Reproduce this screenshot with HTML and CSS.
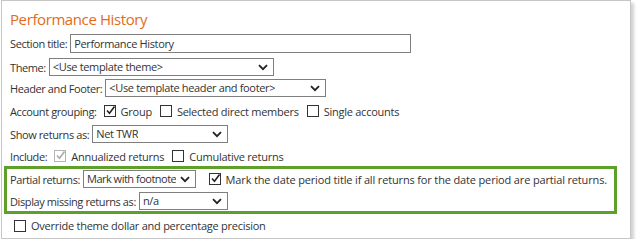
FILE: index.html
```html
<!DOCTYPE html>
<html lang="en">
<head>
    <meta charset="UTF-8">
    <title>Performance History</title>
    <link rel="stylesheet" href="styles.css">
</head>
<body>

<div class="panel">
    <h2 class="panel-title">Performance History</h2>

    <div class="row row-title">
        <label>Section title:</label>
        <div class="textbox">Performance History</div>
    </div>

    <div class="row row-theme">
        <label>Theme:</label>
        <div class="select select-theme"><span>&lt;Use template theme&gt;</span><svg class="chev" width="10" height="7" viewBox="0 0 10 7"><path d="M1 1.2 L5 5.2 L9 1.2" fill="none" stroke="#222" stroke-width="1.8"/></svg></div>
    </div>

    <div class="row row-header">
        <label>Header and Footer:</label>
        <div class="select select-header"><span>&lt;Use template header and footer&gt;</span><svg class="chev" width="10" height="7" viewBox="0 0 10 7"><path d="M1 1.2 L5 5.2 L9 1.2" fill="none" stroke="#222" stroke-width="1.8"/></svg></div>
    </div>

    <div class="row row-check">
        <label>Account grouping:</label>
        <span class="check checked"><svg width="11" height="11" viewBox="0 0 11 11"><path d="M2 5.5 L4.5 8.3 L9.5 1.5" fill="none" stroke="#222" stroke-width="1.6"/></svg></span>
        <span class="opt">Group</span>
        <span class="check"></span>
        <span class="opt">Selected direct members</span>
        <span class="check"></span>
        <span class="opt">Single accounts</span>
    </div>

    <div class="row row-show">
        <label>Show returns as:</label>
        <div class="select select-show"><span>Net TWR</span><svg class="chev" width="10" height="7" viewBox="0 0 10 7"><path d="M1 1.2 L5 5.2 L9 1.2" fill="none" stroke="#222" stroke-width="1.8"/></svg></div>
    </div>

    <div class="row row-check row-include">
        <label>Include:</label>
        <span class="check disabled"><svg width="11" height="11" viewBox="0 0 11 11"><path d="M2 5.5 L4.5 8.3 L9.5 1.5" fill="none" stroke="#a8a8a8" stroke-width="1.6"/></svg></span>
        <span class="opt">Annualized returns</span>
        <span class="check"></span>
        <span class="opt">Cumulative returns</span>
    </div>

    <div class="highlight">
        <div class="row row-partial">
            <label>Partial returns:</label>
            <div class="select select-partial"><span>Mark with footnote</span><svg class="chev" width="10" height="7" viewBox="0 0 10 7"><path d="M1 1.2 L5 5.2 L9 1.2" fill="none" stroke="#222" stroke-width="1.8"/></svg></div>
            <span class="check checked check-mark"><svg width="11" height="11" viewBox="0 0 11 11"><path d="M2 5.5 L4.5 8.3 L9.5 1.5" fill="none" stroke="#222" stroke-width="1.6"/></svg></span>
            <span class="opt">Mark the date period title if all returns for the date period are partial returns.</span>
        </div>
        <div class="row row-missing">
            <label>Display missing returns as:</label>
            <div class="select select-missing"><span>n/a</span><svg class="chev" width="10" height="7" viewBox="0 0 10 7"><path d="M1 1.2 L5 5.2 L9 1.2" fill="none" stroke="#222" stroke-width="1.8"/></svg></div>
        </div>
    </div>

    <div class="row row-check row-override">
        <span class="check"></span>
        <span class="opt">Override theme dollar and percentage precision</span>
    </div>
</div>

</body>
</html>
```

FILE: styles.css
```css
body {
    margin: 0;
    padding: 0;
    background-color: #fff;
    font-family: "Segoe UI", "Open Sans", sans-serif;
    font-size: 11px;
    letter-spacing: -0.25px;
    color: #333;
}

.panel {
    width: 612px;
    margin-left: 1px;
    padding: 0 8px 1px 8px;
    border: 1px solid #c6c6c6;
    background-color: #fff;
    box-shadow: 3px 3px 3px rgba(0, 0, 0, 0.18);
}

.panel-title {
    margin: 0;
    padding-top: 8px;
    height: 25px;
    font-size: 15px;
    font-weight: normal;
    letter-spacing: -0.4px;
    line-height: 20px;
    color: #e26b1b;
}

.row {
    display: flex;
    align-items: center;
    height: 19px;
    margin-bottom: 3px;
    white-space: nowrap;
}

.row label {
    margin-right: 3px;
    letter-spacing: -0.4px;
}

.textbox,
.select {
    box-sizing: border-box;
    height: 19px;
    border: 1px solid #7f7f7f;
    padding: 0 4px 0 3px;
    line-height: 17px;
    background-color: #fff;
    letter-spacing: -0.35px;
}

.select {
    display: flex;
    align-items: center;
    justify-content: space-between;
    height: 18px;
    line-height: 16px;
}

.select span {
    overflow: hidden;
}

.select-partial span {
    letter-spacing: -0.5px;
}

.chev {
    flex-shrink: 0;
    margin-left: 2px;
    margin-right: 1px;
}

.textbox { width: 341px; }
.select-theme { width: 225px; }
.select-header { width: 221px; }
.select-show { width: 136px; }
.select-partial { width: 134px; }
.select-missing { width: 89px; }

.row-title { margin-bottom: 5px; }
.row-theme { height: 18px; }
.row-header { height: 18px; }
.row-check { height: 22px; }
.row-show { height: 18px; margin-bottom: 4px; }
.row-include { height: 18px; margin-bottom: 1px; }

.check {
    box-sizing: border-box;
    display: inline-flex;
    align-items: center;
    justify-content: center;
    width: 12px;
    height: 12px;
    border: 1px solid #333;
    margin: 0 5px 0 4px;
    background-color: #fff;
}

.check svg {
    margin-top: -2px;
    margin-right: -1px;
}

.check.disabled {
    border-color: #b4b4b4;
}

.opt {
    margin-right: 4px;
}

.check-mark {
    margin-left: 13px;
}

.check-mark + .opt {
    letter-spacing: -0.15px;
}

.highlight {
    margin: 0 5px 0 -6px;
    padding: 1px 3px 0 3px;
    border: 3px solid #5fa02a;
}

.highlight .row {
    height: 18px;
    margin-bottom: 4px;
}

.highlight .row-missing {
    margin-bottom: 1px;
}

.row-override {
    height: 17px;
    margin-top: 3px;
}
```
